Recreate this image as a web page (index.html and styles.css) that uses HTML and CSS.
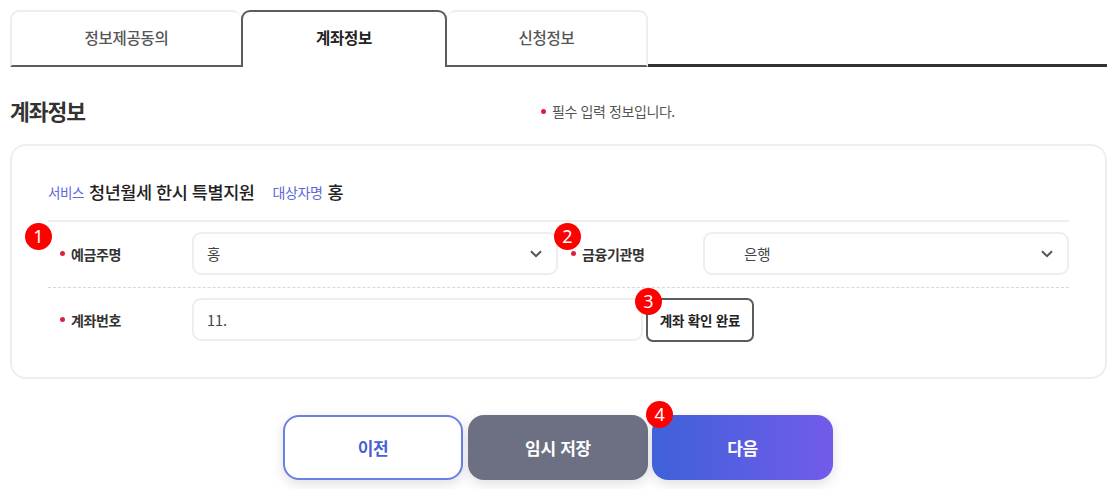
FILE: index.html
```html
<!DOCTYPE html>
<html lang="ko">
<head>
<meta charset="utf-8">
<title>계좌정보</title>
<link rel="stylesheet" href="styles.css">
</head>
<body>
<main class="page">
  <nav class="tabs">
    <a class="tab tab-first">정보제공동의</a>
    <a class="tab tab-active">계좌정보</a>
    <a class="tab tab-last">신청정보</a>
    <span class="tab-rest"></span>
  </nav>
  <header class="head">
    <h1 class="title">계좌정보</h1>
    <p class="note"><i class="dot"></i>필수 입력 정보입니다.</p>
  </header>
  <section class="card">
    <div class="info">
      <span class="info-key">서비스</span><span class="info-val">청년월세 한시 특별지원</span>
      <span class="info-key info-key-2">대상자명</span><span class="info-val">홍</span>
    </div>
    <div class="row row-first">
      <span class="badge badge-1">1</span>
      <label class="label label-a"><i class="dot"></i>예금주명</label>
      <div class="field field-a"><span>홍</span>
        <svg class="chev" viewBox="0 0 12 8" width="12" height="8"><path d="M1 1.2 6 6.2 11 1.2" fill="none" stroke="#555" stroke-width="2"/></svg>
      </div>
      <span class="badge badge-2">2</span>
      <label class="label label-b"><i class="dot"></i>금융기관명</label>
      <div class="field field-b"><span class="bank">은행</span>
        <svg class="chev" viewBox="0 0 12 8" width="12" height="8"><path d="M1 1.2 6 6.2 11 1.2" fill="none" stroke="#555" stroke-width="2"/></svg>
      </div>
    </div>
    <div class="row row-second">
      <label class="label label-a"><i class="dot"></i>계좌번호</label>
      <div class="field field-wide"><span>11.</span></div>
      <span class="badge badge-3">3</span>
      <button class="check" type="button">계좌 확인 완료</button>
    </div>
  </section>
  <div class="actions">
    <button class="btn btn-prev" type="button">이전</button>
    <button class="btn btn-save" type="button">임시 저장</button>
    <button class="btn btn-next" type="button">다음<span class="badge badge-4">4</span></button>
  </div>
</main>
</body>
</html>
```
FILE: styles.css
```css
* { box-sizing: border-box; }
html, body { margin: 0; height: 489px; overflow: hidden; background: #fff; }
body { font-family: "Noto Sans CJK KR", "Noto Sans", sans-serif; color: #222; }
.page { padding: 10px 9px 0 10px; }

.tabs { display: flex; height: 57px; align-items: stretch; }
.tab { display: flex; align-items: center; justify-content: center; font-size: 15.5px; font-weight: 500; color: #555; letter-spacing: -0.3px; background: #fff; border: 2px solid #eeeeee; border-bottom: 2px solid #5c5c5c; border-radius: 9px 9px 0 0; padding-bottom: 3px; }
.tab-first { width: 231px; border-right: 0; }
.tab-active { width: 206px; color: #222; font-weight: 700; border: 2px solid #5c5c5c; border-bottom: 0; padding-bottom: 5px; }
.tab-last { width: 201px; border-left: 0; }
.tab-rest { flex: 1; border-bottom: 3px solid #333; }

.head { display: flex; align-items: center; height: 77px; padding-top: 11px; }
.title { margin: 0 0 2px; width: 531px; font-size: 21.5px; font-weight: 700; letter-spacing: -1px; color: #333; }
.note { margin: 0; font-size: 14px; color: #555; letter-spacing: -0.4px; display: flex; align-items: center; }
.dot { display: inline-block; width: 5px; height: 5px; border-radius: 50%; background: #d8213f; margin-right: 6px; flex: none; }

.card { height: 235px; border: 2px solid #eeeeee; border-radius: 16px; padding: 0 36px; }
.info { display: flex; align-items: center; height: 76px; border-bottom: 2px solid #eeeeee; padding-top: 17px; }
.info-key { font-size: 13.5px; color: #5a68d8; letter-spacing: -0.4px; margin-right: 5px; }
.info-key-2 { font-size: 14px; margin-left: 18px; }
.info-val { font-size: 17.5px; font-weight: 500; color: #222; letter-spacing: -0.45px; }

.row { position: relative; display: flex; align-items: center; padding-left: 12px; }
.row-first { height: 66px; padding-bottom: 2px; border-bottom: 1px dashed #d8d8d8; }
.row-second { height: 63px; }
.label { display: flex; align-items: center; font-size: 14px; font-weight: 700; color: #333; letter-spacing: -0.4px; flex: none; }
.label .dot { margin-right: 6px; }
.label-a { width: 132px; }
.label-b { width: 132px; margin-left: 13px; }
.field { display: flex; align-items: center; justify-content: space-between; height: 43px; padding: 0 13px; border: 2px solid #eeeeee; border-radius: 9px; font-size: 14.5px; color: #444; background: #fff; }
.field-a, .field-b { width: 366px; }
.field-wide { width: 451px; }
.bank { margin-left: 26px; }
.chev { margin-right: 1px; }

.check { width: 108px; height: 44px; margin-left: 3px; padding: 0; border: 2px solid #5c5c5c; border-radius: 7px; background: #fff; font: 700 13.5px "Noto Sans CJK KR", sans-serif; color: #222; letter-spacing: -0.2px; }

.badge { position: absolute; width: 27px; height: 27px; border-radius: 50%; background: #f00; color: #fff; font: 400 18px/27px "Noto Sans", sans-serif; text-align: center; z-index: 2; }
.badge-1 { left: -23px; top: 1px; }
.badge-2 { left: 506px; top: 1px; }
.badge-3 { left: 587px; top: 0; }
.badge-4 { left: -6px; top: -14px; }

.actions { display: flex; justify-content: center; gap: 5px; margin-top: 36px; padding-right: 1px; }
.btn { position: relative; width: 180px; height: 65px; border-radius: 16px; border: 0; font: 700 17px "Noto Sans CJK KR", sans-serif; letter-spacing: -0.3px; box-shadow: 0 4px 12px rgba(60, 60, 90, .16); }
.btn-prev { background: #fff; color: #4a5fd6; border: 2px solid #6b80e4; }
.btn-save { background: #6d7083; color: #fff; }
.btn-next { width: 181px; margin-left: -1px; background: linear-gradient(90deg, #3f61d9, #725bea); color: #fff; }
```
